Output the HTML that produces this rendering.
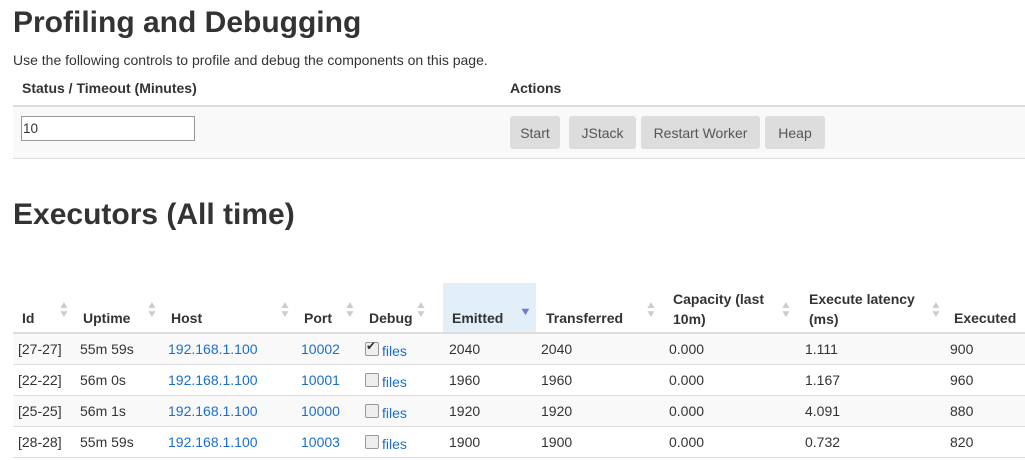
<!DOCTYPE html>
<html><head><style>
body{margin:0;width:1025px;height:460px;overflow:hidden;background:#fff;font-family:"Liberation Sans",sans-serif;color:#333;position:relative}
.a{position:absolute;white-space:nowrap}
h1{position:absolute;margin:0;font-size:30px;font-weight:bold;color:#333}
.th{position:absolute;font-size:14px;font-weight:bold;color:#333}
.td{position:absolute;font-size:14px;color:#333}
.lk{color:#1a6fc9}
.btn{position:absolute;top:116px;height:33px;background:#ddd;border-radius:3px;font-size:14px;color:#555;line-height:34px;text-align:center}
.srt{position:absolute;font-size:10px;color:#ccc;line-height:9px;transform:scaleX(1.2)}
.cb{position:absolute;width:12px;height:12px;border:1px solid #999;border-radius:2px;background:#eee}
</style></head><body>
<h1 style="left:13px;top:6px">Profiling and Debugging</h1>
<div class="a" style="left:13px;top:52px;font-size:14px">Use the following controls to profile and debug the components on this page.</div>
<div class="th" style="left:22px;top:80px">Status / Timeout (Minutes)</div>
<div class="th" style="left:510px;top:80px">Actions</div>
<div class="a" style="left:13px;top:105px;width:1012px;height:2px;background:#ddd"></div>
<div class="a" style="left:13px;top:107px;width:1012px;height:51px;background:#f9f9f9;border-bottom:1px solid #ddd"></div>
<div class="a" style="left:21px;top:116px;width:171px;height:23px;border:1px solid #999;background:#fff;font-size:13.5px;line-height:23px;padding-left:1px">10</div>
<div class="btn" style="left:510px;width:50px">Start</div>
<div class="btn" style="left:569px;width:67px">JStack</div>
<div class="btn" style="left:641px;width:119px">Restart Worker</div>
<div class="btn" style="left:765px;width:60px">Heap</div>

<h1 style="left:13px;top:198px">Executors (All time)</h1>

<div class="a" style="left:443px;top:283px;width:93px;height:50px;background:#e2eef8"></div>
<div class="th" style="left:22px;top:310px">Id</div>
<div class="th" style="left:83px;top:310px">Uptime</div>
<div class="th" style="left:171px;top:310px">Host</div>
<div class="th" style="left:304px;top:310px">Port</div>
<div class="th" style="left:369px;top:310px">Debug</div>
<div class="th" style="left:452px;top:310px">Emitted</div>
<div class="th" style="left:546px;top:310px">Transferred</div>
<div class="th" style="left:673px;top:289px;line-height:20px">Capacity (last<br>10m)</div>
<div class="th" style="left:809px;top:289px;line-height:20px">Execute latency<br>(ms)</div>
<div class="th" style="left:954px;top:310px">Executed</div>
<div class="srt" style="left:59px;top:301px">▲<br>▼</div>
<div class="srt" style="left:147px;top:301px">▲<br>▼</div>
<div class="srt" style="left:280px;top:301px">▲<br>▼</div>
<div class="srt" style="left:345px;top:301px">▲<br>▼</div>
<div class="srt" style="left:416px;top:301px">▲<br>▼</div>
<div class="a" style="left:520px;top:306px;font-size:11px;color:#6b7bd6;transform:scaleX(1.2)">▼</div>
<div class="srt" style="left:646px;top:301px">▲<br>▼</div>
<div class="srt" style="left:781px;top:301px">▲<br>▼</div>
<div class="srt" style="left:931px;top:301px">▲<br>▼</div>
<div class="a" style="left:13px;top:332px;width:1012px;height:2px;background:#ddd"></div>

<div class="a" style="left:13px;top:334px;width:1012px;height:30px;background:#f9f9f9;border-bottom:1px solid #ddd"></div>
<div class="a" style="left:13px;top:365px;width:1012px;height:30px;background:#fff;border-bottom:1px solid #ddd"></div>
<div class="a" style="left:13px;top:396px;width:1012px;height:30px;background:#f9f9f9;border-bottom:1px solid #ddd"></div>
<div class="a" style="left:13px;top:427px;width:1012px;height:30px;background:#fff;border-bottom:1px solid #ddd"></div>

<div class="td" style="left:18px;top:341px">[27-27]</div><div class="td" style="left:80px;top:341px">55m 59s</div><div class="td lk" style="left:168px;top:341px">192.168.1.100</div><div class="td lk" style="left:301px;top:341px">10002</div><div class="cb" style="left:365px;top:342px"></div><div class="a" style="left:366px;top:339px;font-size:12px">✔</div><div class="td lk" style="left:382px;top:343px">files</div><div class="td" style="left:449px;top:341px">2040</div><div class="td" style="left:541px;top:341px">2040</div><div class="td" style="left:669px;top:341px">0.000</div><div class="td" style="left:805px;top:341px">1.111</div><div class="td" style="left:950px;top:341px">900</div>

<div class="td" style="left:18px;top:372px">[22-22]</div><div class="td" style="left:80px;top:372px">56m 0s</div><div class="td lk" style="left:168px;top:372px">192.168.1.100</div><div class="td lk" style="left:301px;top:372px">10001</div><div class="cb" style="left:365px;top:373px"></div><div class="td lk" style="left:382px;top:374px">files</div><div class="td" style="left:449px;top:372px">1960</div><div class="td" style="left:541px;top:372px">1960</div><div class="td" style="left:669px;top:372px">0.000</div><div class="td" style="left:805px;top:372px">1.167</div><div class="td" style="left:950px;top:372px">960</div>

<div class="td" style="left:18px;top:403px">[25-25]</div><div class="td" style="left:80px;top:403px">56m 1s</div><div class="td lk" style="left:168px;top:403px">192.168.1.100</div><div class="td lk" style="left:301px;top:403px">10000</div><div class="cb" style="left:365px;top:404px"></div><div class="td lk" style="left:382px;top:405px">files</div><div class="td" style="left:449px;top:403px">1920</div><div class="td" style="left:541px;top:403px">1920</div><div class="td" style="left:669px;top:403px">0.000</div><div class="td" style="left:805px;top:403px">4.091</div><div class="td" style="left:950px;top:403px">880</div>

<div class="td" style="left:18px;top:434px">[28-28]</div><div class="td" style="left:80px;top:434px">55m 59s</div><div class="td lk" style="left:168px;top:434px">192.168.1.100</div><div class="td lk" style="left:301px;top:434px">10003</div><div class="cb" style="left:365px;top:435px"></div><div class="td lk" style="left:382px;top:436px">files</div><div class="td" style="left:449px;top:434px">1900</div><div class="td" style="left:541px;top:434px">1900</div><div class="td" style="left:669px;top:434px">0.000</div><div class="td" style="left:805px;top:434px">0.732</div><div class="td" style="left:950px;top:434px">820</div>
</body></html>
